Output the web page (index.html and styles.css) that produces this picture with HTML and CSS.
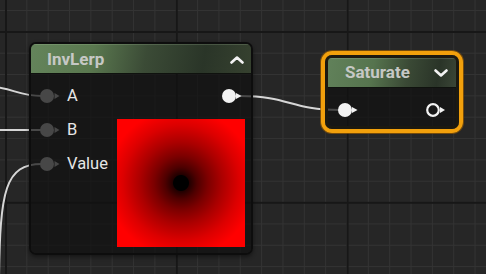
FILE: index.html
```html
<!DOCTYPE html>
<html lang="en">

<head>
  <meta charset="UTF-8">
  <title>Material graph</title>
  <link rel="stylesheet" href="styles.css">
</head>

<body>

  <div class="graph">

    <!-- wires sit under the nodes -->
    <svg class="wires" width="486" height="274" viewBox="0 0 486 274">
      <path d="M -20 86 C 12 86, 16 96, 42 96" />
      <path d="M -5 130 L 42 130" />
      <path d="M -1 280 C 0 190, 5 164, 42 164" />
      <path d="M 240 96 C 290 96, 290 110, 340 110" />
    </svg>

    <div class="node invlerp">
      <div class="node-head">
        <span class="node-title">InvLerp</span>
        <svg class="toggle" width="14" height="8" viewBox="0 0 14 8">
          <polyline points="1.5,6.5 7,1.5 12.5,6.5" />
        </svg>
      </div>
      <div class="node-body">
        <div class="pins-in">
          <div class="pin-row">
            <svg class="pin" width="20" height="14" viewBox="0 0 20 14">
              <circle cx="7" cy="7" r="7" />
              <path d="M14.5 4 L19.5 7 L14.5 10 Z" />
            </svg>
            <span class="pin-label">A</span>
          </div>
          <div class="pin-row">
            <svg class="pin" width="20" height="14" viewBox="0 0 20 14">
              <circle cx="7" cy="7" r="7" />
              <path d="M14.5 4 L19.5 7 L14.5 10 Z" />
            </svg>
            <span class="pin-label">B</span>
          </div>
          <div class="pin-row">
            <svg class="pin" width="20" height="14" viewBox="0 0 20 14">
              <circle cx="7" cy="7" r="7" />
              <path d="M14.5 4 L19.5 7 L14.5 10 Z" />
            </svg>
            <span class="pin-label">Value</span>
          </div>
        </div>
        <div class="pins-out">
          <div class="pin-row">
            <svg class="pin pin-on" width="20" height="14" viewBox="0 0 20 14">
              <circle cx="7" cy="7" r="7" />
              <path d="M14 4 L19.5 7 L14 10 Z" />
            </svg>
          </div>
          <div class="preview"></div>
        </div>
      </div>
    </div>

    <div class="selection">
      <div class="node saturate">
        <div class="node-head">
          <span class="node-title">Saturate</span>
          <svg class="toggle" width="14" height="8" viewBox="0 0 14 8">
            <polyline points="1.5,1.5 7,6.5 12.5,1.5" />
          </svg>
        </div>
        <div class="node-body">
          <svg class="pin pin-on" width="20" height="14" viewBox="0 0 20 14">
            <circle cx="7" cy="7" r="7" />
            <path d="M14 4 L19.5 7 L14 10 Z" />
          </svg>
          <svg class="pin pin-ring" width="20" height="14" viewBox="0 0 20 14">
            <circle cx="7" cy="7" r="5.8" />
            <path d="M14 4 L19 7 L14 10 Z" />
          </svg>
        </div>
      </div>
    </div>

  </div>

</body>

</html>
```

FILE: styles.css
```css
body {
  margin: 0;
  background-color: #262626;
  font-family: "Roboto", "DejaVu Sans", sans-serif;
}

/* canvas with minor / major grid lines */
.graph {
  position: relative;
  width: 486px;
  height: 274px;
  overflow: hidden;
  background-color: #262626;
  background-image:
    linear-gradient(to right, #171717 0, #171717 1.5px, transparent 1.5px),
    linear-gradient(to bottom, #171717 0, #171717 1.5px, transparent 1.5px),
    linear-gradient(to right, #333333 0, #333333 1px, transparent 1px),
    linear-gradient(to bottom, #333333 0, #333333 1px, transparent 1px);
  background-size:
    170.8px 170.8px,
    170.8px 170.8px,
    21.35px 21.35px,
    21.35px 21.35px;
  background-position:
    5px 31px,
    5px 31px,
    5px 10px,
    5px 10px;
}

.wires {
  position: absolute;
  left: 0;
  top: 0;
}

.wires path {
  fill: none;
  stroke: #d6d6d6;
  stroke-width: 2;
}

/* nodes */
.node {
  position: absolute;
  box-sizing: border-box;
  display: flex;
  flex-direction: column;
  border: 2px solid #0d0d0d;
  border-radius: 7px;
  overflow: hidden;
  box-shadow: 0 2px 4px rgba(0, 0, 0, 0.45);
}

.node-head {
  display: flex;
  align-items: center;
  justify-content: space-between;
  height: 30px;
  box-sizing: border-box;
  background: linear-gradient(100deg, #64845b 0%, #5a784f 28%, #3b4b36 52%, #2a3528 78%, #36412f 100%);
  box-shadow: inset 0 1px 0 rgba(200, 230, 190, 0.18);
  border-bottom: 1px solid #0f120e;
}

.node-title {
  font-weight: 700;
  font-size: 17px;
  color: #c6c8c5;
  line-height: 1;
}

.toggle polyline {
  fill: none;
  stroke: #f2f2f2;
  stroke-width: 2.6;
  stroke-linecap: round;
  stroke-linejoin: round;
}

.node-body {
  flex: 1;
  background: rgba(16, 16, 16, 0.72);
}

/* pins */
.pin circle,
.pin path {
  fill: #474747;
}

.pin-on circle,
.pin-on path {
  fill: #f2f2f2;
}

.pin-ring circle {
  fill: none;
  stroke: #f2f2f2;
  stroke-width: 2.2;
}

.pin-ring path {
  fill: #f2f2f2;
}

.pin-row {
  display: flex;
  align-items: center;
  gap: 7px;
  height: 34px;
}

.pin-label {
  font-size: 16.5px;
  color: #e6e6e6;
  line-height: 1;
}

/* InvLerp */
.invlerp {
  left: 29px;
  top: 42px;
  width: 224px;
  height: 213px;
}

.invlerp .node-head {
  padding: 2px 7px 0 16px;
}

.invlerp .node-body {
  display: flex;
  justify-content: space-between;
  padding: 5px 6px 6px 9px;
}

.pins-out {
  display: flex;
  flex-direction: column;
  align-items: flex-end;
}

.pins-out .pin-row {
  margin-right: 3px;
}

.preview {
  width: 128px;
  height: 128px;
  margin-top: 6px;
  background: radial-gradient(circle at 50% 50%,
      #000000 0,
      #000000 7.5px,
      #220000 8.5px,
      #4e0000 16px,
      #7c0000 27px,
      #ab0000 41px,
      #dc0000 58px,
      #ff0000 74px);
}

/* Saturate, selected */
.selection {
  position: absolute;
  left: 321px;
  top: 51px;
  width: 142px;
  height: 82px;
  box-sizing: border-box;
  border: 4px solid #f2a00c;
  border-radius: 11px;
  box-shadow: 0 0 0 1px rgba(150, 90, 0, 0.7), inset 0 0 0 1px rgba(255, 200, 80, 0.35);
}

.saturate {
  position: static;
  width: 100%;
  height: 100%;
  border: 3px solid #1c1910;
  border-radius: 7px;
  box-shadow: none;
}

.saturate .node-head {
  padding: 0 8px 0 17px;
  background: linear-gradient(100deg, #61815a 0%, #56744e 35%, #3a4935 62%, #2a3428 85%, #3a4536 100%);
}

.saturate .node-body {
  display: flex;
  align-items: center;
  justify-content: space-between;
  padding: 6px 10px 0 10px;
}
```
